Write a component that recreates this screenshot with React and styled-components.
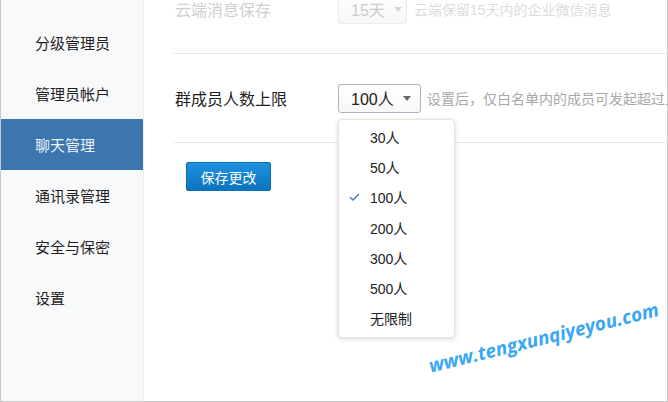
import React from "react";
import styled, { createGlobalStyle } from "styled-components";

const GlobalStyle = createGlobalStyle`
  html, body {
    margin: 0;
    padding: 0;
    background: #ffffff;
  }
  body {
    font-family: "Liberation Sans", "Noto Sans CJK SC", sans-serif;
    color: #222;
  }
`;

const Frame = styled.div`
  position: relative;
  width: 668px;
  height: 402px;
  box-sizing: border-box;
  border: 1px solid #c9c9c9;
  border-top: none;
  display: flex;
  overflow: hidden;
  background: #fff;
`;

const Sidebar = styled.nav`
  width: 142px;
  flex-shrink: 0;
  background: #f8f9fb;
  border-right: 1px dotted #e2e4e8;
  padding-top: 17px;
  display: flex;
  flex-direction: column;
`;

const NavItem = styled.div`
  height: 51px;
  display: flex;
  align-items: center;
  padding-left: 34px;
  font-size: 15px;
  color: ${({ $active }) => ($active ? "#eef3f9" : "#1f1f1f")};
  background: ${({ $active }) => ($active ? "#3b76b0" : "transparent")};
`;

const Main = styled.main`
  flex: 1;
  overflow: hidden;
  padding-left: 30px;
`;

const Content = styled.div`
  margin-top: -35px;
`;

const Row = styled.div`
  height: 88px;
  border-bottom: 1px solid #e8e8e8;
  display: flex;
  align-items: center;
  white-space: nowrap;
`;

const Label = styled.div`
  width: 163px;
  padding-left: 1px;
  flex-shrink: 0;
  font-size: 16px;
  color: ${({ $muted }) => ($muted ? "#cfcfcf" : "#1f1f1f")};
`;

const SelectWrap = styled.div`
  position: relative;
  flex-shrink: 0;
`;

const SelectBox = styled.div`
  box-sizing: border-box;
  height: 29px;
  width: ${({ $w }) => $w}px;
  display: flex;
  align-items: center;
  gap: 9px;
  padding: 0 10px 0 12px;
  border: 1px solid ${({ $disabled }) => ($disabled ? "#ececec" : "#a9b3c2")};
  border-radius: 3px;
  background: linear-gradient(#ffffff, #f7f7f7);
  font-size: 16px;
  color: ${({ $disabled }) => ($disabled ? "#cccccc" : "#222")};
`;

const Caret = styled.span`
  width: 0;
  height: 0;
  border-left: 4.5px solid transparent;
  border-right: 4.5px solid transparent;
  border-top: 5px solid ${({ $disabled }) => ($disabled ? "#d6d6d6" : "#666")};
`;

const Hint = styled.div`
  margin-left: ${({ $gap }) => $gap}px;
  font-size: 14px;
  color: ${({ $muted }) => ($muted ? "#dcdcdc" : "#a8a8a8")};
  overflow: hidden;
`;

const Menu = styled.ul`
  position: absolute;
  top: calc(100% + 6px);
  left: 0;
  z-index: 2;
  box-sizing: border-box;
  width: 117px;
  margin: 0;
  padding: 2px 0 3px;
  list-style: none;
  background: #fff;
  border: 1px solid #e4e4e4;
  border-radius: 4px;
  box-shadow: 0 1px 5px rgba(0, 0, 0, 0.16);
`;

const MenuItem = styled.li`
  height: 30.3px;
  display: flex;
  align-items: center;
  padding-left: 10px;
  font-size: 14px;
  color: #222;
`;

const CheckSlot = styled.span`
  width: 21px;
  display: flex;
  align-items: center;
`;

const Actions = styled.div`
  padding: 19px 0 0 12px;
`;

const SaveButton = styled.button`
  box-sizing: border-box;
  width: 85px;
  height: 29px;
  border: 1px solid #0b6db3;
  border-radius: 2px;
  background: linear-gradient(#2092de, #0a73bd);
  color: #fff;
  font-family: inherit;
  font-size: 14px;
  cursor: pointer;
`;

const Watermark = styled.div`
  position: absolute;
  left: 428px;
  top: 353px;
  transform: rotate(-14deg);
  transform-origin: left center;
  font-family: "Open Sans", "DejaVu Sans", sans-serif;
  font-style: italic;
  font-weight: 700;
  font-size: 19px;
  color: #3aa7f4;
  white-space: nowrap;
  pointer-events: none;
`;

const navItems = ["分级管理员", "管理员帐户", "聊天管理", "通讯录管理", "安全与保密", "设置"];
const limits = ["30人", "50人", "100人", "200人", "300人", "500人", "无限制"];

function Check() {
  return (
    <svg width="11" height="8" viewBox="0 0 11 8">
      <polyline points="1,4.2 4,7 10,1" fill="none" stroke="#3b7cc9" strokeWidth="1.4" />
    </svg>
  );
}

export default function App() {
  const selected = "100人";
  return (
    <>
      <GlobalStyle />
      <Frame>
        <Sidebar>
          {navItems.map((item) => (
            <NavItem key={item} $active={item === "聊天管理"}>
              {item}
            </NavItem>
          ))}
        </Sidebar>
        <Main>
          <Content>
            <Row>
              <Label $muted>云端消息保存</Label>
              <SelectWrap>
                <SelectBox $w={69} $disabled>
                  15天
                  <Caret $disabled />
                </SelectBox>
              </SelectWrap>
              <Hint $gap={7} $muted>
                云端保留15天内的企业微信消息
              </Hint>
            </Row>
            <Row>
              <Label>群成员人数上限</Label>
              <SelectWrap>
                <SelectBox $w={83}>
                  {selected}
                  <Caret />
                </SelectBox>
                <Menu>
                  {limits.map((opt) => (
                    <MenuItem key={opt}>
                      <CheckSlot>{opt === selected && <Check />}</CheckSlot>
                      {opt}
                    </MenuItem>
                  ))}
                </Menu>
              </SelectWrap>
              <Hint $gap={6}>设置后，仅白名单内的成员可发起超过上限人数的群聊</Hint>
            </Row>
            <Actions>
              <SaveButton>保存更改</SaveButton>
            </Actions>
          </Content>
        </Main>
        <Watermark>www.tengxunqiyeyou.com</Watermark>
      </Frame>
    </>
  );
}
